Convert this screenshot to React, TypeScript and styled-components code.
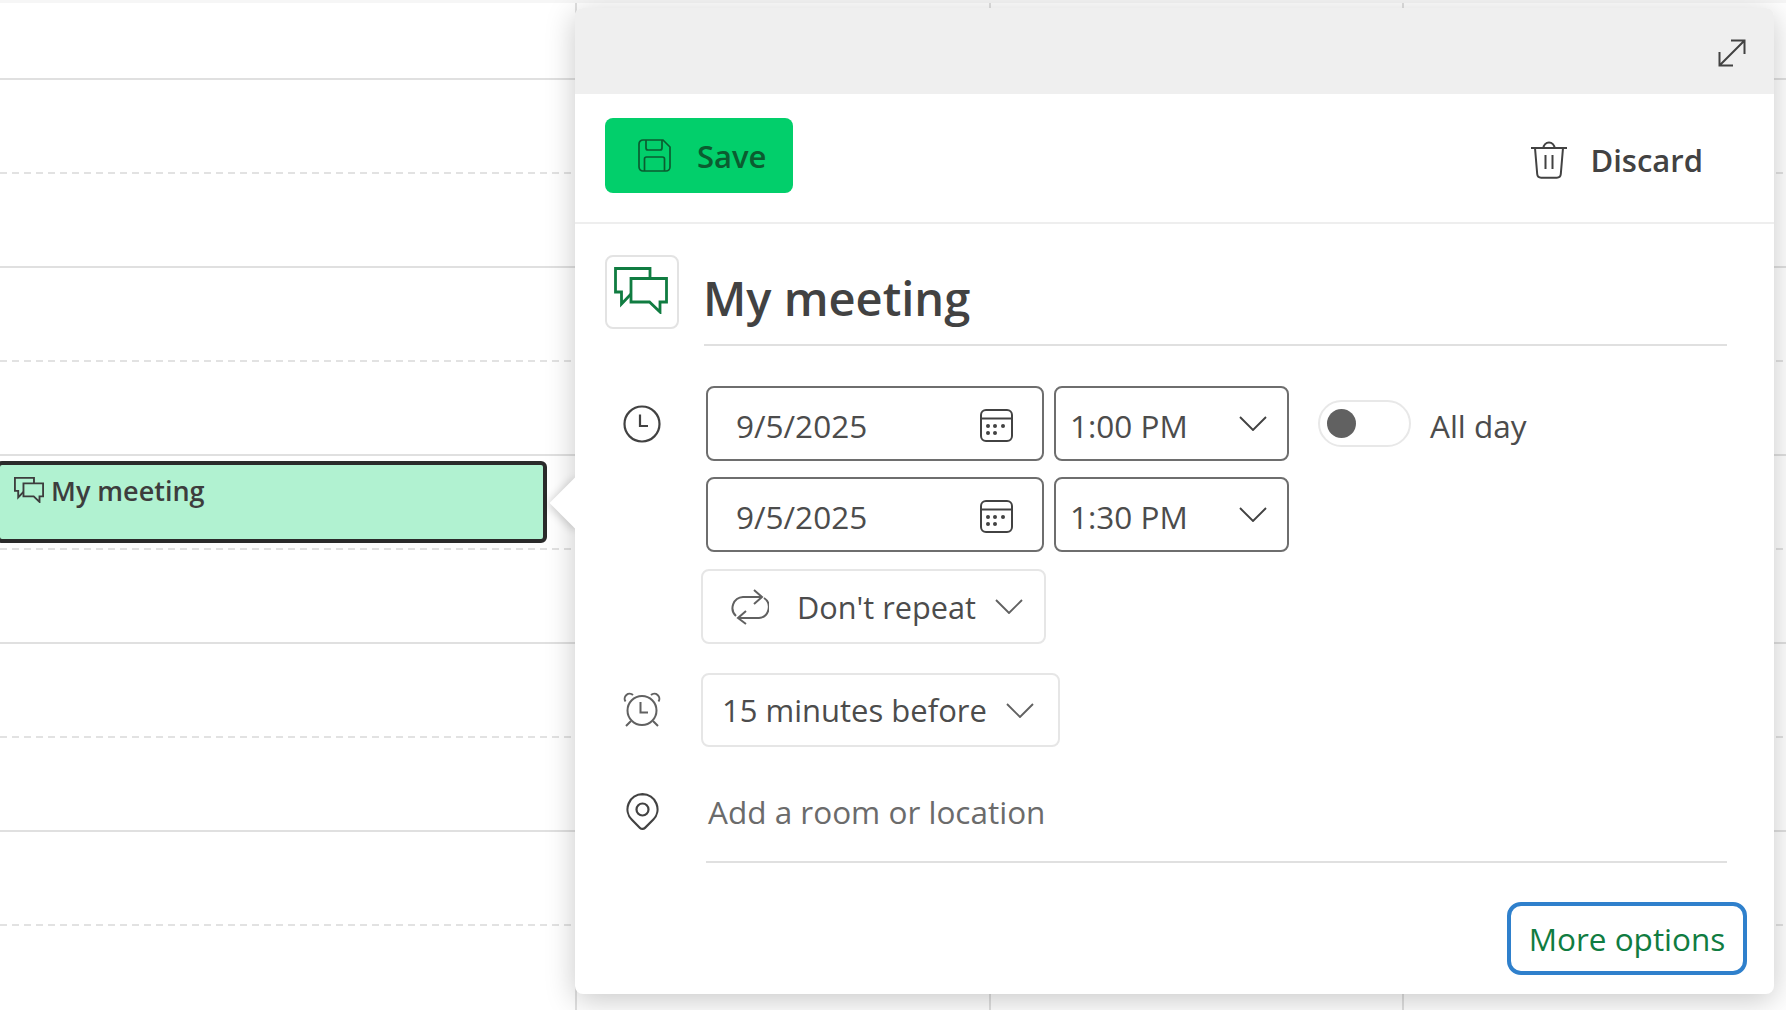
import React from 'react';
import styled, { createGlobalStyle } from 'styled-components';

const GlobalStyle = createGlobalStyle`
  * {
    box-sizing: border-box;
  }
  html,
  body {
    margin: 0;
    padding: 0;
    background: #fff;
    font-family: 'Open Sans', 'Noto Sans', sans-serif;
    color: #424242;
  }
`;

const SLOTS = Array.from({ length: 11 }, (_, i) => i);

const ChatIcon = ({ width, height, color, stroke }: { width: number; height: number; color: string; stroke: number }) => (
  <svg width={width} height={height} viewBox="0 0 54 47" fill="none" stroke={color} strokeWidth={stroke}>
    <path d="M36 11V1.5H1.5V25H7.5V37L17 27" />
    <path d="M17 11.5H52.5V35H46V45L35.5 35H17Z" />
  </svg>
);

const Chevron = ({ color = '#424242' }: { color?: string }) => (
  <svg width="28" height="15" viewBox="0 0 28 15" fill="none" stroke={color} strokeWidth="1.9">
    <path d="M1 1l13 13L27 1" />
  </svg>
);

const CalendarIcon = () => (
  <CalendarGlyph width="33" height="33" viewBox="0 0 33 33" fill="none" stroke="#424242" strokeWidth="2">
    <rect x="1" y="1" width="31" height="31" rx="5" />
    <path d="M1 9.5h31" />
    <g fill="#424242" stroke="none">
      <circle cx="8" cy="17" r="2" />
      <circle cx="15" cy="17" r="2" />
      <circle cx="23" cy="17" r="2" />
      <circle cx="8" cy="24" r="2" />
      <circle cx="15" cy="24" r="2" />
    </g>
  </CalendarGlyph>
);

const App: React.FC = () => {
  return (
    <>
      <GlobalStyle />
      <Page>
        <TopBand />
        <Calendar>
          {[0, 1, 2, 3].map(col => (
            <DayColumn key={col}>
              {SLOTS.map(i => (
                <Slot key={i} $first={i === 0} $dashed={i % 2 === 1} />
              ))}
              {col === 0 && (
                <EventCard>
                  <ChatIcon width={30} height={26} color="#3d3d3d" stroke={3.4} />
                  <EventTitle>My meeting</EventTitle>
                </EventCard>
              )}
            </DayColumn>
          ))}
        </Calendar>

        <Popover>
          <BeakClip>
            <Beak />
          </BeakClip>
          <Header>
            <svg width="28" height="28" viewBox="0 0 28 28" fill="none" stroke="#424242" strokeWidth="2">
              <path d="M1.500 26.500L26.500 1.500M13 1.500h13.500V15M1.500 13v13.500H15" />
            </svg>
          </Header>
          <Toolbar>
            <SaveButton>
              <svg width="33" height="33" viewBox="0 0 33 33" fill="none" stroke="#0b5c30" strokeWidth="1.7">
                <path d="M5 1h20l7 7v20a4 4 0 0 1-4 4H5a4 4 0 0 1-4-4V5a4 4 0 0 1 4-4z" />
                <path d="M8 1v8a2 2 0 0 0 2 2h12a2 2 0 0 0 2-2V1" />
                <path d="M6.500 32V20a2 2 0 0 1 2-2h16a2 2 0 0 1 2 2v12" />
              </svg>
              Save
            </SaveButton>
            <DiscardButton>
              <svg width="38" height="38" viewBox="0 0 38 38" fill="none" stroke="#424242" strokeWidth="2">
                <path d="M1 7h36M13.500 7a5.500 5.500 0 0 1 11 0" />
                <path d="M5 7l2.200 26a4 4 0 0 0 4 3.700h15.600a4 4 0 0 0 4-3.700L33 7" />
                <path d="M15.500 14v14M22.500 14v14" />
              </svg>
              Discard
            </DiscardButton>
          </Toolbar>
          <Form>
            <TitleRow>
              <TypeButton>
                <ChatIcon width={54} height={47} color="#107c41" stroke={2.8} />
              </TypeButton>
              <TitleField>My meeting</TitleField>
            </TitleRow>

            <FieldRow $top={40}>
              <IconCell>
                <svg width="38" height="38" viewBox="0 0 38 38" fill="none" stroke="#424242" strokeWidth="2.2">
                  <circle cx="19" cy="19" r="17.500" />
                  <path d="M17 9.500V21h8" />
                </svg>
              </IconCell>
              <DateTimeStack>
                <DateTimeRow>
                  <DateInput>
                    <ValueText>9/5/2025</ValueText>
                    <CalendarIcon />
                  </DateInput>
                  <TimeInput>
                    <ValueText>1:00 PM</ValueText>
                    <Chevron />
                  </TimeInput>
                  <Toggle>
                    <Knob />
                  </Toggle>
                  <ToggleLabel>All day</ToggleLabel>
                </DateTimeRow>
                <DateTimeRow>
                  <DateInput>
                    <ValueText>9/5/2025</ValueText>
                    <CalendarIcon />
                  </DateInput>
                  <TimeInput>
                    <ValueText>1:30 PM</ValueText>
                    <Chevron />
                  </TimeInput>
                </DateTimeRow>
              </DateTimeStack>
            </FieldRow>

            <FieldRow $top={17}>
              <IconCell />
              <RepeatSelect>
                <svg width="38" height="36" viewBox="0 0 38 36" fill="none" stroke="#616161" strokeWidth="2">
                  <path d="M5 27A11 11 0 0 1 12 8h19" />
                  <path d="M33 9a11 11 0 0 1-5 20H7" />
                  <path d="M23 1l8 7-8 7M15 22l-8 7 8 6" />
                </svg>
                <RepeatText>Don't repeat</RepeatText>
                <Chevron color="#616161" />
              </RepeatSelect>
            </FieldRow>

            <FieldRow $top={29}>
              <IconCell $height={74}>
                <svg width="38" height="36" viewBox="0 0 38 36" fill="none" stroke="#616161" strokeWidth="2">
                  <circle cx="19" cy="18.500" r="14.500" />
                  <path d="M17.500 10v10.500H25" />
                  <path d="M2.500 9.500a5 5 0 0 1 7.500-6.500M35.500 9.500a5 5 0 0 0-7.500-6.500M3 34l5-5M35 34l-5-5" />
                </svg>
              </IconCell>
              <ReminderSelect>
                <SelectText>15 minutes before</SelectText>
                <Chevron color="#616161" />
              </ReminderSelect>
            </FieldRow>

            <FieldRow $top={30}>
              <IconCell $height={70}>
                <svg width="33" height="38" viewBox="0 0 33 38" fill="none" stroke="#424242" strokeWidth="2.2">
                  <path d="M16.500 1.200a15 15 0 0 1 10.600 25.600L19 34.900a3.500 3.500 0 0 1-5 0l-8.100-8.100A15 15 0 0 1 16.500 1.200z" />
                  <circle cx="16.500" cy="16.500" r="6" />
                </svg>
              </IconCell>
              <LocationField>Add a room or location</LocationField>
            </FieldRow>

            <Footer>
              <MoreOptions>More options</MoreOptions>
            </Footer>
          </Form>
        </Popover>
      </Page>
    </>
  );
};

export default App;

const Page = styled.div`
  position: relative;
  width: 1786px;
  height: 1010px;
  overflow: hidden;
  background: #fff;
`;
const TopBand = styled.div`
  height: 3px;
  background: #f6f6f6;
`;
const Calendar = styled.div`
  display: grid;
  grid-template-columns: 577px 414px 413px 1fr;
`;
const DayColumn = styled.div`
  position: relative;
  border-right: 2px solid #e0e0e0;
  &:last-child {
    border-right: none;
  }
`;
const Slot = styled.div<{ $first: boolean; $dashed: boolean }>`
  height: ${props => (props.$first ? 77 : 94)}px;
  background: ${props =>
    props.$dashed
      ? 'repeating-linear-gradient(90deg, #e2e2e2 0 7px, transparent 7px 12px) bottom / 100% 2px no-repeat'
      : 'linear-gradient(#e0e0e0, #e0e0e0) bottom / 100% 2px no-repeat'};
`;
const EventCard = styled.div`
  position: absolute;
  top: 458px;
  left: -4px;
  width: 551px;
  height: 82px;
  display: flex;
  align-items: flex-start;
  gap: 7px;
  padding: 12px 0 0 14px;
  background: #b1f2d1;
  border: 4px solid #2b2b2b;
  border-radius: 6px;
`;
const EventTitle = styled.span`
  margin-top: -1px;
  font-size: 27px;
  line-height: 30px;
  font-weight: 600;
  color: #3d3d3d;
`;
const Popover = styled.div`
  position: absolute;
  top: 8px;
  left: 575px;
  width: 1199px;
  height: 986px;
  background: #fff;
  border-radius: 8px;
  box-shadow: 0 6px 30px rgba(0, 0, 0, 0.22);
  z-index: 1;
`;
const BeakClip = styled.div`
  position: absolute;
  top: 450px;
  left: -32px;
  width: 32px;
  height: 90px;
  overflow: hidden;
`;
const Beak = styled.div`
  position: absolute;
  top: 27px;
  left: 14px;
  width: 36px;
  height: 36px;
  background: #fff;
  transform: rotate(45deg);
  box-shadow: 0 2px 10px rgba(0, 0, 0, 0.2);
`;
const Header = styled.div`
  height: 86px;
  display: flex;
  justify-content: flex-end;
  align-items: flex-start;
  padding: 31px 28px 0 0;
  background: #efefef;
  border-radius: 8px 8px 0 0;
`;
const Toolbar = styled.div`
  height: 130px;
  display: flex;
  justify-content: space-between;
  align-items: flex-start;
  padding: 24px 71px 0 30px;
  border-bottom: 2px solid #eeeeee;
`;
const SaveButton = styled.div`
  width: 188px;
  height: 75px;
  display: flex;
  align-items: center;
  gap: 26px;
  padding-left: 33px;
  background: #02cf6b;
  border-radius: 8px;
  font-size: 31px;
  font-weight: 600;
  color: #0b5c30;
`;
const DiscardButton = styled.div`
  display: flex;
  align-items: center;
  gap: 22px;
  margin-top: 21px;
  font-size: 31px;
  font-weight: 600;
  color: #424242;
`;
const Form = styled.div`
  padding: 31px 0 0 30px;
`;
const TitleRow = styled.div`
  display: flex;
  align-items: flex-start;
  gap: 25px;
`;
const TypeButton = styled.div`
  width: 74px;
  height: 74px;
  flex: none;
  display: flex;
  align-items: center;
  justify-content: center;
  padding: 0 2px 4px 0;
  border: 2px solid #e3e3e3;
  border-radius: 8px;
`;
const TitleField = styled.div`
  width: 1023px;
  height: 91px;
  padding: 10px 0 0 0;
  text-indent: -1px;
  border-bottom: 2px solid #e0e0e0;
  font-size: 47px;
  line-height: 66px;
  font-weight: 600;
  color: #424242;
`;
const FieldRow = styled.div<{ $top: number }>`
  display: grid;
  grid-template-columns: 96px 1fr;
  margin-top: ${props => props.$top}px;
`;
const IconCell = styled.div<{ $height?: number }>`
  width: 74px;
  height: ${props => (props.$height ? `${props.$height}px` : '75px')};
  display: flex;
  align-items: center;
  justify-content: center;
`;
const DateTimeStack = styled.div`
  display: flex;
  flex-direction: column;
  gap: 16px;
  padding-left: 5px;
`;
const DateTimeRow = styled.div`
  display: flex;
  align-items: center;
`;
const InputBox = styled.div`
  height: 75px;
  display: flex;
  align-items: center;
  justify-content: space-between;
  border: 2px solid #6e6e6e;
  border-radius: 8px;
  font-size: 31.5px;
  color: #4c4c4c;
`;
const ValueText = styled.span`
  padding-top: 4px;
`;
const CalendarGlyph = styled.svg`
  margin-top: 4px;
`;
const DateInput = styled(InputBox)`
  width: 338px;
  padding: 0 29px 0 28px;
`;
const TimeInput = styled(InputBox)`
  width: 235px;
  margin-left: 10px;
  padding: 0 20px 0 14px;
`;
const Toggle = styled.div`
  width: 93px;
  height: 47px;
  margin-left: 29px;
  display: flex;
  align-items: center;
  padding-left: 7px;
  border: 2px solid #e8e8e8;
  border-radius: 24px;
`;
const Knob = styled.div`
  width: 29px;
  height: 29px;
  border-radius: 50%;
  background: #616161;
`;
const ToggleLabel = styled.span`
  margin-left: 19px;
  padding-top: 4px;
  font-size: 31.5px;
  color: #4c4c4c;
`;
const SelectBox = styled.div`
  height: 75px;
  display: flex;
  align-items: center;
  border: 2px solid #e6e6e6;
  border-radius: 8px;
  font-size: 31px;
  color: #4c4c4c;
`;
const RepeatSelect = styled(SelectBox)`
  width: 345px;
  padding-left: 28px;
  gap: 19px;
  font-size: 30.7px;
`;
const ReminderSelect = styled(SelectBox)`
  width: 359px;
  height: 74px;
  padding-left: 19px;
  gap: 19px;
`;
const SelectText = styled.span`
  white-space: nowrap;
`;
const RepeatText = styled(SelectText)`
  margin-left: 9px;
`;
const LocationField = styled.div`
  width: 1021px;
  height: 86px;
  margin-left: 5px;
  padding: 0 0 16px 2px;
  display: flex;
  align-items: center;
  border-bottom: 2px solid #e0e0e0;
  font-size: 31.5px;
  color: #6b6b6b;
`;
const Footer = styled.div`
  display: flex;
  justify-content: flex-end;
  margin-top: 39px;
  padding-right: 27px;
`;
const MoreOptions = styled.div`
  width: 240px;
  height: 73px;
  display: flex;
  align-items: center;
  justify-content: center;
  border: 4px solid #2f80cc;
  border-radius: 14px;
  font-size: 31.5px;
  color: #107c41;
`;
